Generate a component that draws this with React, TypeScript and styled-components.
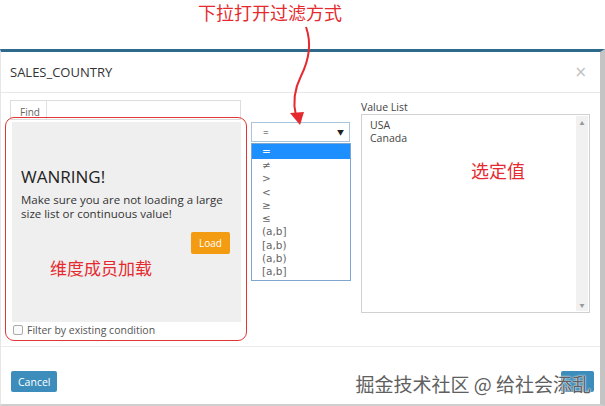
import styled, { createGlobalStyle } from "styled-components";

const GlobalStyle = createGlobalStyle`
  html, body {
    margin: 0;
    padding: 0;
    background: #fff;
  }
  body {
    font-family: "Open Sans", "Noto Sans CJK SC", sans-serif;
    color: #333;
    width: 605px;
    height: 406px;
    overflow: hidden;
  }
`;

const Page = styled.div`
  position: relative;
  width: 605px;
  height: 406px;
  display: flex;
  flex-direction: column;
`;

const Note = styled.div`
  font-family: "Noto Sans CJK SC", sans-serif;
  color: #e52a2f;
  font-size: ${(p: { $size?: number }) => p.$size || 18}px;
  line-height: 1.2;
  white-space: nowrap;
`;

const TopNote = styled(Note)`
  height: 49px;
  box-sizing: border-box;
  padding: 2px 0 0 198px;
`;

const Arrow = styled.svg`
  position: absolute;
  left: 0;
  top: 0;
  pointer-events: none;
  z-index: 5;
`;

const Modal = styled.div`
  flex: 1;
  display: flex;
  flex-direction: column;
  border-top: 3px solid #2d6a8c;
  border-right: 5px solid #c4c4c4;
  border-bottom: 2px solid #cfcfcf;
  border-left: 1px solid #e6e6e6;
  position: relative;
`;

const Header = styled.div`
  height: 40px;
  display: flex;
  align-items: center;
  justify-content: space-between;
  padding: 0 13px 0 9px;
  border-bottom: 1px solid #e8e8e8;
  font-size: 13px;
  color: #333;
`;

const Close = styled.span`
  font-size: 15px;
  color: #c0c0c0;
  font-family: "DejaVu Sans", sans-serif;
`;

const Body = styled.div`
  display: flex;
  padding: 7px 0 0 9px;
  height: 246px;
  border-bottom: 1px solid #ececec;
`;

const LeftCol = styled.div`
  width: 231px;
  display: flex;
  flex-direction: column;
  position: relative;
`;

const FindBox = styled.div`
  height: 20px;
  display: flex;
  border: 1px solid #ddd;
  box-sizing: border-box;
`;

const FindLabel = styled.span`
  width: 36px;
  border-right: 1px solid #e0e0e0;
  font-size: 10px;
  color: #666;
  padding: 4px 0 0 9px;
  box-sizing: border-box;
`;

const Warn = styled.div`
  margin: 2px 0 0 2px;
  height: 200px;
  background: #efefef;
  box-sizing: border-box;
  padding: 45px 11px 0 9px;
  display: flex;
  flex-direction: column;
`;

const WarnTitle = styled.div`
  font-size: 17px;
  line-height: 20px;
  color: #222;
`;

const WarnText = styled.div`
  margin-top: 6px;
  font-size: 11.5px;
  line-height: 14px;
  color: #333;
`;

const LoadButton = styled.button`
  align-self: flex-end;
  margin-top: 11px;
  width: 39px;
  height: 22px;
  border: none;
  border-radius: 2px;
  background: #f39c12;
  color: #fff;
  font-family: "Open Sans", sans-serif;
  font-size: 10px;
  padding: 0;
`;

const PanelNote = styled(Note)`
  margin: 4px 0 0 29px;
`;

const CheckRow = styled.label`
  display: flex;
  align-items: center;
  gap: 4px;
  margin: 1px 0 0 3px;
  font-size: 10.5px;
  color: #555;
`;

const Check = styled.span`
  width: 8px;
  height: 8px;
  border: 1px solid #aaa;
  border-radius: 2px;
  background: #fafafa;
`;

const Ring = styled.div`
  position: absolute;
  left: -5px;
  top: 17px;
  width: 242px;
  height: 224px;
  border: 1px solid #e03535;
  border-radius: 9px;
  box-sizing: border-box;
  pointer-events: none;
`;

const MidCol = styled.div`
  width: 99px;
  margin-left: 10px;
  padding-top: 22px;
  position: relative;
`;

const Select = styled.div`
  height: 20px;
  border: 1px solid #aac4dc;
  box-sizing: border-box;
  display: flex;
  align-items: center;
  justify-content: space-between;
  padding: 0 5px 0 11px;
  font-size: 10px;
  color: #333;
`;

const Caret = styled.span`
  font-size: 7px;
  color: #222;
`;

const Menu = styled.ul`
  position: absolute;
  top: 43px;
  left: 0;
  width: 100px;
  margin: 0;
  padding: 0 0 1px;
  list-style: none;
  border: 1px solid #7fa6cf;
  box-sizing: border-box;
  background: #fff;
`;

const Option = styled.li<{ $active?: boolean }>`
  height: 13.3px;
  line-height: 13.3px;
  padding-left: 10px;
  font-size: 10.5px;
  font-family: "DejaVu Sans", sans-serif;
  color: ${(p) => (p.$active ? "#fff" : "#666")};
  background: ${(p) => (p.$active ? "#1e8fff" : "transparent")};
  &:first-child {
    height: 15px;
    line-height: 15px;
  }
`;

const RightCol = styled.div`
  width: 229px;
  margin-left: 11px;
  display: flex;
  flex-direction: column;
`;

const ListLabel = styled.div`
  font-size: 10.5px;
  color: #444;
  height: 14px;
  line-height: 14px;
`;

const ValueBox = styled.div`
  position: relative;
  height: 199px;
  border: 1px solid #d0d0d0;
  box-sizing: border-box;
  display: flex;
`;

const Values = styled.div`
  flex: 1;
  padding: 4px 0 0 8px;
  font-size: 10.5px;
  line-height: 13px;
  color: #444;
`;

const Scroll = styled.div`
  width: 12px;
  margin: 1px 1px 1px 0;
  background: #f1f1f1;
  display: flex;
  flex-direction: column;
  justify-content: space-between;
  align-items: center;
  font-size: 5px;
  color: #999;
  padding: 3px 0;
  box-sizing: border-box;
`;

const BoxNote = styled(Note)`
  position: absolute;
  left: 109px;
  top: 45px;
`;

const Footer = styled.div`
  flex: 1;
  display: flex;
  align-items: flex-start;
  justify-content: space-between;
  padding: 24px 6px 0 10px;
`;

const Button = styled.button<{ $tone?: string }>`
  height: 21px;
  min-width: 33px;
  padding: 0 7px;
  border: none;
  border-radius: 2px;
  background: ${(p) => p.$tone || "#3c8dbc"};
  color: #fff;
  font-family: "Liberation Sans Narrow", "Open Sans", sans-serif;
  font-size: 10.5px;
`;

const Watermark = styled.div`
  position: absolute;
  right: 9px;
  bottom: 7px;
  font-family: "Noto Sans CJK SC", sans-serif;
  font-size: 19px;
  color: #606060;
  text-shadow: 0 0 2px #fff, 0 0 1px #fff;
  white-space: nowrap;
`;

const ops = ["=", "≠", ">", "<", "≥", "≤", "(a,b]", "[a,b)", "(a,b)", "[a,b]"];

export default function App() {
  return (
    <Page>
      <GlobalStyle />
      <TopNote>下拉打开过滤方式</TopNote>
      <Arrow width="605" height="130" viewBox="0 0 605 130">
        <path
          d="M306 27 C312 44 309 60 301 76 C293 92 293 104 296 116"
          stroke="#e52a2f"
          strokeWidth="2"
          fill="none"
        />
        <polygon points="290,113 304,112 300,125" fill="#e52a2f" />
      </Arrow>
      <Modal>
        <Header>
          <span>SALES_COUNTRY</span>
          <Close>×</Close>
        </Header>
        <Body>
          <LeftCol>
            <FindBox>
              <FindLabel>Find</FindLabel>
            </FindBox>
            <Warn>
              <WarnTitle>WANRING!</WarnTitle>
              <WarnText>
                Make sure you are not loading a large
                <br />
                size list or continuous value!
              </WarnText>
              <LoadButton>Load</LoadButton>
              <PanelNote $size={17}>维度成员加载</PanelNote>
            </Warn>
            <CheckRow>
              <Check />
              Filter by existing condition
            </CheckRow>
            <Ring />
          </LeftCol>
          <MidCol>
            <Select>
              <span>=</span>
              <Caret>▼</Caret>
            </Select>
            <Menu>
              {ops.map((o, i) => (
                <Option key={i} $active={i === 0}>
                  {o}
                </Option>
              ))}
            </Menu>
          </MidCol>
          <RightCol>
            <ListLabel>Value List</ListLabel>
            <ValueBox>
              <Values>
                USA
                <br />
                Canada
              </Values>
              <Scroll>
                <span>▲</span>
                <span>▼</span>
              </Scroll>
              <BoxNote>选定值</BoxNote>
            </ValueBox>
          </RightCol>
        </Body>
        <Footer>
          <Button>Cancel</Button>
          <Button $tone="#3c8dbc" aria-label="OK" />
        </Footer>
        <Watermark>掘金技术社区 @ 给社会添乱</Watermark>
      </Modal>
    </Page>
  );
}
